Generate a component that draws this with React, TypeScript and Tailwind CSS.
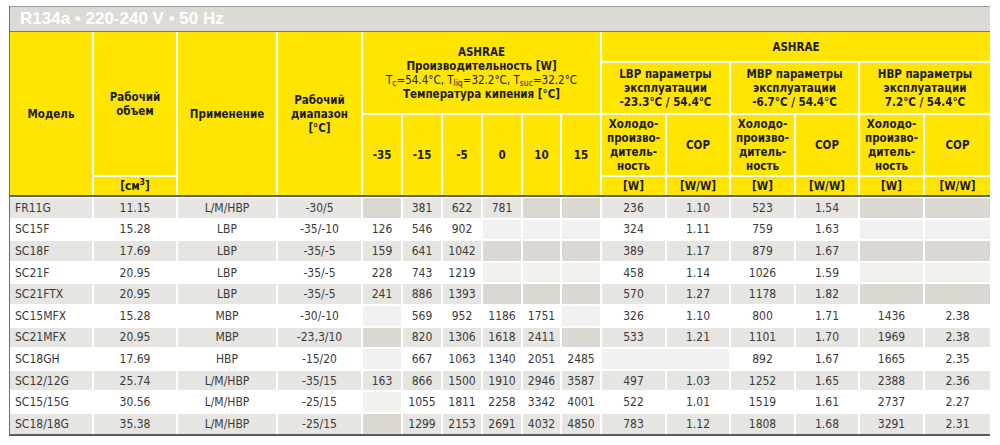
import React from "react";

const cols =
  "grid grid-cols-[82px_82px_98px_83px_38px_38px_38px_38px_37px_38px_63px_62px_63px_62px_63px_65px] gap-[2px]";

type Row = (string | null)[];

// null = merged empty cell (2 columns)
const rows: Row[] = [
  ["FR11G", "11.15", "L/M/HBP", "-30/5", "", "381", "622", "781", "", "", "236", "1.10", "523", "1.54", "", ""],
  ["SC15F", "15.28", "LBP", "-35/-10", "126", "546", "902", "", "", "", "324", "1.11", "759", "1.63", "", ""],
  ["SC18F", "17.69", "LBP", "-35/-5", "159", "641", "1042", "", "", "", "389", "1.17", "879", "1.67", "", ""],
  ["SC21F", "20.95", "LBP", "-35/-5", "228", "743", "1219", "", "", "", "458", "1.14", "1026", "1.59", "", ""],
  ["SC21FTX", "20.95", "LBP", "-35/-5", "241", "886", "1393", "", "", "", "570", "1.27", "1178", "1.82", "", ""],
  ["SC15MFX", "15.28", "MBP", "-30/-10", "", "569", "952", "1186", "1751", "", "326", "1.10", "800", "1.71", "1436", "2.38"],
  ["SC21MFX", "20.95", "MBP", "-23,3/10", "", "820", "1306", "1618", "2411", "", "533", "1.21", "1101", "1.70", "1969", "2.38"],
  ["SC18GH", "17.69", "HBP", "-15/20", "", "667", "1063", "1340", "2051", "2485", null, "892", "1.67", "1665", "2.35"],
  ["SC12/12G", "25.74", "L/M/HBP", "-35/15", "163", "866", "1500", "1910", "2946", "3587", "497", "1.03", "1252", "1.65", "2388", "2.36"],
  ["SC15/15G", "30.56", "L/M/HBP", "-25/15", "", "1055", "1811", "2258", "3342", "4001", "522", "1.01", "1519", "1.61", "2737", "2.27"],
  ["SC18/18G", "35.38", "L/M/HBP", "-25/15", "", "1299", "2153", "2691", "4032", "4850", "783", "1.12", "1808", "1.68", "3291", "2.31"],
];

const temps = ["-35", "-15", "-5", "0", "10", "15"];
const tempCols = ["col-start-5", "col-start-6", "col-start-7", "col-start-8", "col-start-9", "col-start-10"];

const H = "flex items-center justify-center bg-[#ffe500] text-center";

function Params({ name, temp, col }: { name: string; temp: string; col: string }) {
  return (
    <div className={`${H} ${col} row-start-2 col-span-2`}>
      <div>
        {name} параметры
        <br />
        эксплуатации
        <br />
        {temp}
      </div>
    </div>
  );
}

function Capacity({ col }: { col: string }) {
  return (
    <div className={`${H} ${col} row-start-3`}>
      <div>
        Холодо-
        <br />
        произво-
        <br />
        дитель-
        <br />
        ность
      </div>
    </div>
  );
}

export default function App() {
  return (
    <div className="h-[445px] w-[1000px] bg-white pt-[6px] pl-[9px] font-['DejaVu_Sans_Condensed','DejaVu_Sans',sans-serif]">
      <div className="w-[981px] border-l border-[#6f6f6f]">
        <div className="flex h-[26px] items-center border-t border-b border-t-[#9a9a9a] border-b-[#777] bg-[#dddad5] pl-[10px] font-['Liberation_Sans',Arial,sans-serif] text-[17px] font-bold text-white">
          R134a • 220-240 V • 50 Hz
        </div>

        <div className={`${cols} grid-rows-[29px_50px_60px_18px] bg-white text-[11.5px] leading-[14px] font-bold text-[#1c1c1c]`}>
          <div className={`${H} col-start-1 row-start-1 row-span-4`}>Модель</div>
          <div className={`${H} col-start-2 row-start-1 row-span-3`}>
            <div>
              Рабочий
              <br />
              объем
            </div>
          </div>
          <div className={`${H} col-start-2 row-start-4`}>
            [см<sup>3</sup>]
          </div>
          <div className={`${H} col-start-3 row-start-1 row-span-4`}>Применение</div>
          <div className={`${H} col-start-4 row-start-1 row-span-4`}>
            <div>
              Рабочий
              <br />
              диапазон
              <br />
              [°C]
            </div>
          </div>
          <div className={`${H} col-start-5 row-start-1 col-span-6 row-span-2`}>
            <div>
              ASHRAE
              <br />
              Производительность [W]
              <br />
              <span className="font-normal">
                T<sub>c</sub>=54.4°C, T<sub>liq</sub>=32.2°C, T<sub>suc</sub>=32.2°C
              </span>
              <br />
              Температура кипения [°C]
            </div>
          </div>
          {temps.map((t, i) => (
            <div key={t} className={`${H} ${tempCols[i]} row-start-3 row-span-2`}>
              {t}
            </div>
          ))}
          <div className={`${H} col-start-11 row-start-1 col-span-6`}>ASHRAE</div>
          <Params name="LBP" temp="-23.3°C / 54.4°C" col="col-start-11" />
          <Params name="MBP" temp="-6.7°C / 54.4°C" col="col-start-13" />
          <Params name="HBP" temp="7.2°C / 54.4°C" col="col-start-15" />
          <Capacity col="col-start-11" />
          <div className={`${H} col-start-12 row-start-3`}>COP</div>
          <Capacity col="col-start-13" />
          <div className={`${H} col-start-14 row-start-3`}>COP</div>
          <Capacity col="col-start-15" />
          <div className={`${H} col-start-16 row-start-3`}>COP</div>
          <div className={`${H} col-start-11 row-start-4`}>[W]</div>
          <div className={`${H} col-start-12 row-start-4`}>[W/W]</div>
          <div className={`${H} col-start-13 row-start-4`}>[W]</div>
          <div className={`${H} col-start-14 row-start-4`}>[W/W]</div>
          <div className={`${H} col-start-15 row-start-4`}>[W]</div>
          <div className={`${H} col-start-16 row-start-4`}>[W/W]</div>
        </div>

        <div className="h-[2px] bg-[#5f5f5f]" />

        <div className={`${cols} mt-[1px] auto-rows-[19.6px] bg-white text-[12px] text-[#3a3a3a]`}>
          {rows.map((r, ri) => {
            const odd = ri % 2 === 0;
            return r.map((v, ci) => {
              if (v === null) {
                return (
                  <div key={ci} className={`col-span-2 ${odd ? "bg-[#dbd8d2]" : "bg-[#f2f1ef]"}`} />
                );
              }
              const empty = v === "";
              const bg = empty
                ? odd
                  ? "bg-[#dbd8d2]"
                  : "bg-[#f2f1ef]"
                : odd
                  ? "bg-[#e7e5e1]"
                  : "bg-white";
              return (
                <div
                  key={ci}
                  className={`flex items-center ${ci === 0 ? "justify-start pl-[5px]" : "justify-center"} ${bg}`}
                >
                  {v}
                </div>
              );
            });
          })}
        </div>

        <div className="h-[2px] bg-[#5a5a5a]" />
      </div>
    </div>
  );
}
